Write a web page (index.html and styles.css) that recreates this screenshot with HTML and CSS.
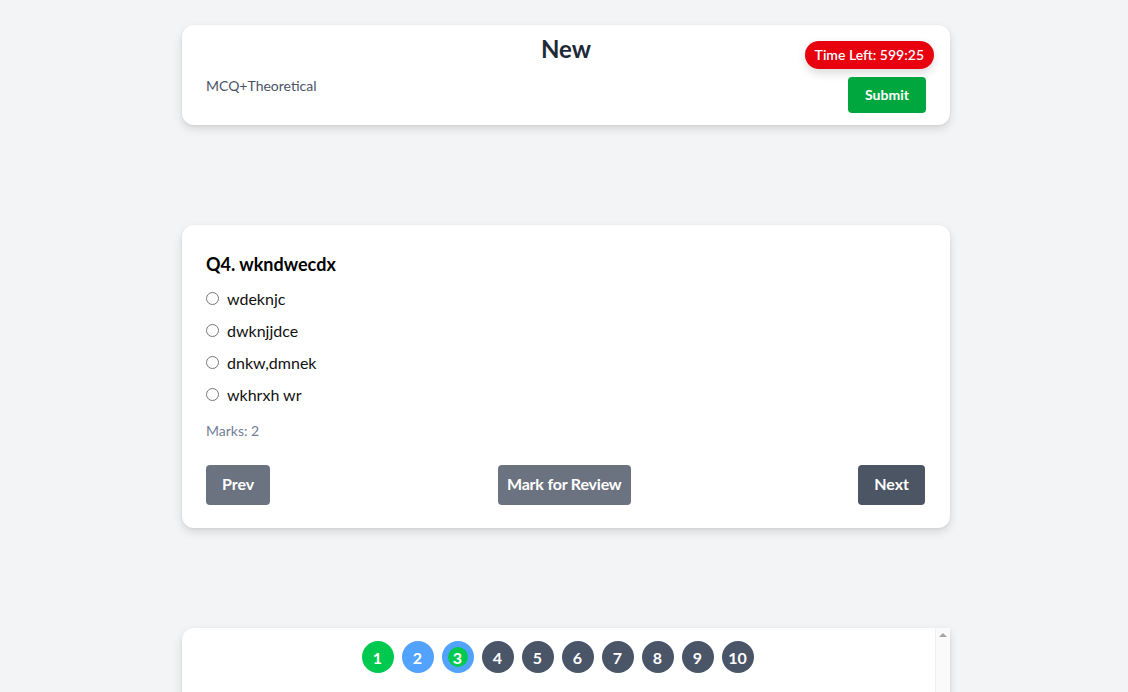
FILE: index.html
```html
<!DOCTYPE html>
<html>
<head>
<meta charset="utf-8">
<link rel="stylesheet" href="styles.css">
</head>
<body>
<div class="page">
  <header class="card head">
    <div class="head-left">
      <h1 class="title">New</h1>
      <p class="subtitle">MCQ+Theoretical</p>
    </div>
    <div class="head-right">
      <span class="timer">Time Left: 599:25</span>
      <button class="btn btn-submit">Submit</button>
    </div>
  </header>

  <section class="card question">
    <h2 class="q-title">Q4. wkndwecdx</h2>
    <label class="opt"><input type="radio" name="q4"><span>wdeknjc</span></label>
    <label class="opt"><input type="radio" name="q4"><span>dwknjjdce</span></label>
    <label class="opt"><input type="radio" name="q4"><span>dnkw,dmnek</span></label>
    <label class="opt"><input type="radio" name="q4"><span>wkhrxh wr</span></label>
    <p class="marks">Marks: 2</p>
    <div class="actions">
      <button class="btn btn-gray">Prev</button>
      <button class="btn btn-gray btn-review">Mark for Review</button>
      <button class="btn btn-dark">Next</button>
    </div>
  </section>

  <nav class="card palette">
    <div class="dots">
      <span class="dot answered">1</span>
      <span class="dot visited">2</span>
      <span class="dot visited current"><span class="inner">3</span></span>
      <span class="dot">4</span>
      <span class="dot">5</span>
      <span class="dot">6</span>
      <span class="dot">7</span>
      <span class="dot">8</span>
      <span class="dot">9</span>
      <span class="dot">10</span>
    </div>
    <div class="scrollbar"><span class="arrow-up"></span></div>
  </nav>
</div>
</body>
</html>
```

FILE: styles.css
```css
* { box-sizing: border-box; }
html, body { margin: 0; padding: 0; }
body {
  background: #f3f4f6;
  font-family: "Lato", "Open Sans", sans-serif;
  color: #1a202c;
  overflow: hidden;
  height: 692px;
  padding-left: 4px;
}
.page {
  width: 768px;
  margin: 0 auto;
  padding-top: 25px;
  display: flex;
  flex-direction: column;
  gap: 100px;
}
.card {
  background: #fff;
  border-radius: 12px;
  box-shadow: 0 4px 10px rgba(0,0,0,0.12), 0 1px 3px rgba(0,0,0,0.06);
}
.head {
  height: 100px;
  padding: 12px 24px 0 24px;
  position: relative;
  display: flex;
  justify-content: space-between;
}
.head-left { flex: 1; }
.title {
  margin: 0;
  text-align: center;
  font-size: 24px;
  font-weight: 700;
  color: #1f2937;
  line-height: 24px;
  position: absolute;
  left: 0; right: 0; top: 12px;
}
.subtitle {
  margin: 39px 0 0 0;
  font-size: 14px;
  color: #4a5568;
  line-height: 20px;
}
.head-right {
  display: flex;
  flex-direction: column;
  align-items: flex-end;
  gap: 8px;
  padding-top: 4px;
  position: relative;
}
.timer {
  background: #e8000f;
  color: #fff;
  font-size: 14px;
  font-weight: 600;
  height: 28px;
  line-height: 27px;
  padding: 0 10px;
  border-radius: 14px;
  margin-right: -8px;
  box-shadow: 0 4px 10px rgba(0,0,0,0.15);
}
.btn {
  border: none;
  border-radius: 4px;
  color: #fff;
  font-family: inherit;
  font-weight: 700;
  cursor: pointer;
}
.btn-submit {
  background: #00a63e;
  font-size: 14px;
  height: 36px;
  width: 78px;
  padding-bottom: 3px;
}
.question {
  padding: 24px;
  height: 303px;
}
.q-title {
  margin: 3px 0 6px 0;
  font-size: 18px;
  font-weight: 700;
  line-height: 24px;
  color: #000;
}
.opt {
  display: flex;
  align-items: center;
  height: 32px;
  font-size: 16px;
  color: #111;
}
.opt input {
  margin: 0 8px 0 0;
  width: 13px;
  height: 13px;
}
.marks {
  margin: 11px 0 0 0;
  font-size: 14px;
  color: #718096;
  line-height: 20px;
}
.actions {
  margin-top: 24px;
  display: flex;
  justify-content: space-between;
  align-items: center;
}
.actions .btn {
  height: 40px;
  font-size: 16px;
  padding: 0 16px 3px 16px;
}
.actions .btn-review { padding: 0 9px 3px 9px; letter-spacing: -0.2px; }
.btn-gray { background: #6b7280; }
.btn-dark { background: #4b5563; margin-right: 1px; }
.palette {
  height: 200px;
  position: relative;
  border-radius: 12px 0 0 0;
  overflow: hidden;
}
.dots {
  display: flex;
  justify-content: center;
  gap: 8px;
  padding-top: 13px;
  padding-right: 17px;
}
.dot {
  width: 32px;
  height: 32px;
  border-radius: 50%;
  background: #4a5568;
  color: #fff;
  font-size: 16px;
  font-weight: 700;
  display: flex;
  align-items: center;
  justify-content: center;
}
.dot.answered { background: #00c94f; }
.dot.visited { background: #52a3ff; }
.dot .inner {
  width: 20px;
  height: 20px;
  border-radius: 50%;
  background: #00c94f;
  display: flex;
  align-items: center;
  justify-content: center;
}
.scrollbar {
  position: absolute;
  top: 0;
  right: 0;
  bottom: 0;
  width: 15px;
  background: #fafafa;
  border-left: 1px solid #f0f0f0;
  display: flex;
  justify-content: center;
  padding-top: 5px;
}
.arrow-up {
  width: 0;
  height: 0;
  border-left: 4px solid transparent;
  border-right: 4px solid transparent;
  border-bottom: 4px solid #a3a3a3;
}
```
